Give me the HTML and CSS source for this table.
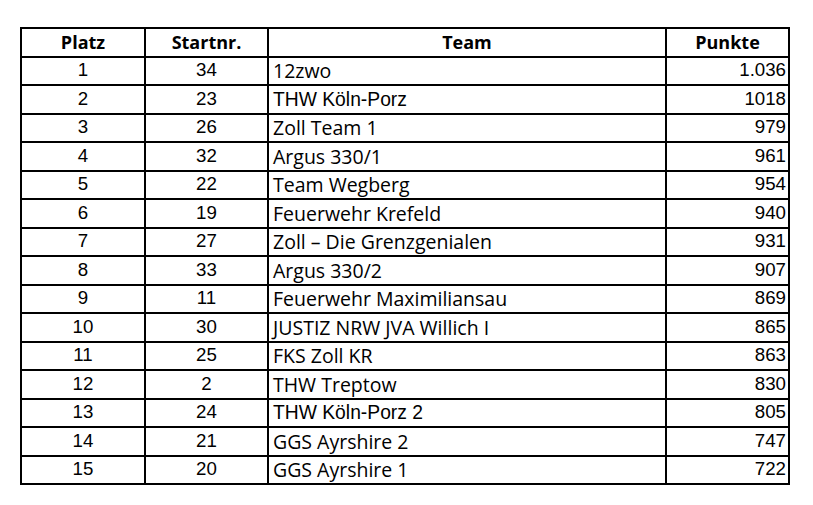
FILE: index.html
```html
<!DOCTYPE html>
<html lang="de">
<head>
<meta charset="utf-8">
<link rel="stylesheet" href="styles.css">
</head>
<body>
<div class="page">
<table class="results">
<colgroup><col class="c1"><col class="c2"><col class="c3"><col class="c4"></colgroup>
<thead>
<tr><th>Platz</th><th>Startnr.</th><th>Team</th><th>Punkte</th></tr>
</thead>
<tbody>
<tr><td class="num">1</td><td class="num">34</td><td class="team">12zwo</td><td class="pts">1.036</td></tr>
<tr><td class="num">2</td><td class="num">23</td><td class="team arial">THW Köln-Porz</td><td class="pts">1018</td></tr>
<tr><td class="num">3</td><td class="num">26</td><td class="team">Zoll Team 1</td><td class="pts">979</td></tr>
<tr><td class="num">4</td><td class="num">32</td><td class="team">Argus 330/1</td><td class="pts">961</td></tr>
<tr><td class="num">5</td><td class="num">22</td><td class="team">Team Wegberg</td><td class="pts">954</td></tr>
<tr><td class="num">6</td><td class="num">19</td><td class="team">Feuerwehr Krefeld</td><td class="pts">940</td></tr>
<tr><td class="num">7</td><td class="num">27</td><td class="team">Zoll – Die Grenzgenialen</td><td class="pts">931</td></tr>
<tr><td class="num">8</td><td class="num">33</td><td class="team">Argus 330/2</td><td class="pts">907</td></tr>
<tr><td class="num">9</td><td class="num">11</td><td class="team">Feuerwehr Maximiliansau</td><td class="pts">869</td></tr>
<tr><td class="num">10</td><td class="num">30</td><td class="team">JUSTIZ NRW JVA Willich I</td><td class="pts">865</td></tr>
<tr><td class="num">11</td><td class="num">25</td><td class="team">FKS Zoll KR</td><td class="pts">863</td></tr>
<tr><td class="num">12</td><td class="num">2</td><td class="team">THW Treptow</td><td class="pts">830</td></tr>
<tr><td class="num">13</td><td class="num">24</td><td class="team arial">THW Köln-Porz 2</td><td class="pts">805</td></tr>
<tr><td class="num">14</td><td class="num">21</td><td class="team">GGS Ayrshire 2</td><td class="pts">747</td></tr>
<tr><td class="num">15</td><td class="num">20</td><td class="team">GGS Ayrshire 1</td><td class="pts">722</td></tr>
</tbody>
</table>
</div>
</body>
</html>
```

FILE: styles.css
```css
html, body {
  margin: 0;
  padding: 0;
  background: #ffffff;
}
.page {
  padding: 27px 24px 0 20px;
}
.results {
  border-collapse: collapse;
  table-layout: fixed;
  width: 768px;
  color: #000;
  font-family: "Open Sans", "Liberation Sans", sans-serif;
  font-size: 18px;
}
.c1 { width: 124px; }
.c2 { width: 123px; }
.c3 { width: 398px; }
.c4 { width: 123px; }
.results th,
.results td {
  border: 2px solid #000;
  height: 26.5px;
  padding: 0 2px;
  line-height: 1;
  white-space: nowrap;
}
.results th {
  font-weight: 700;
  text-align: center;
  font-size: 18px;
}
.num {
  text-align: center;
  font-family: "Liberation Sans", Arial, sans-serif;
  font-size: 18.7px;
}
.pts {
  text-align: right;
  font-family: "Liberation Sans", Arial, sans-serif;
  font-size: 18.7px;
}
.results td.team {
  text-align: left;
  padding-left: 4px;
  font-size: 19.5px;
}
.results td.arial {
  font-family: "Liberation Sans", Arial, sans-serif;
  font-size: 19.3px;
}
```
